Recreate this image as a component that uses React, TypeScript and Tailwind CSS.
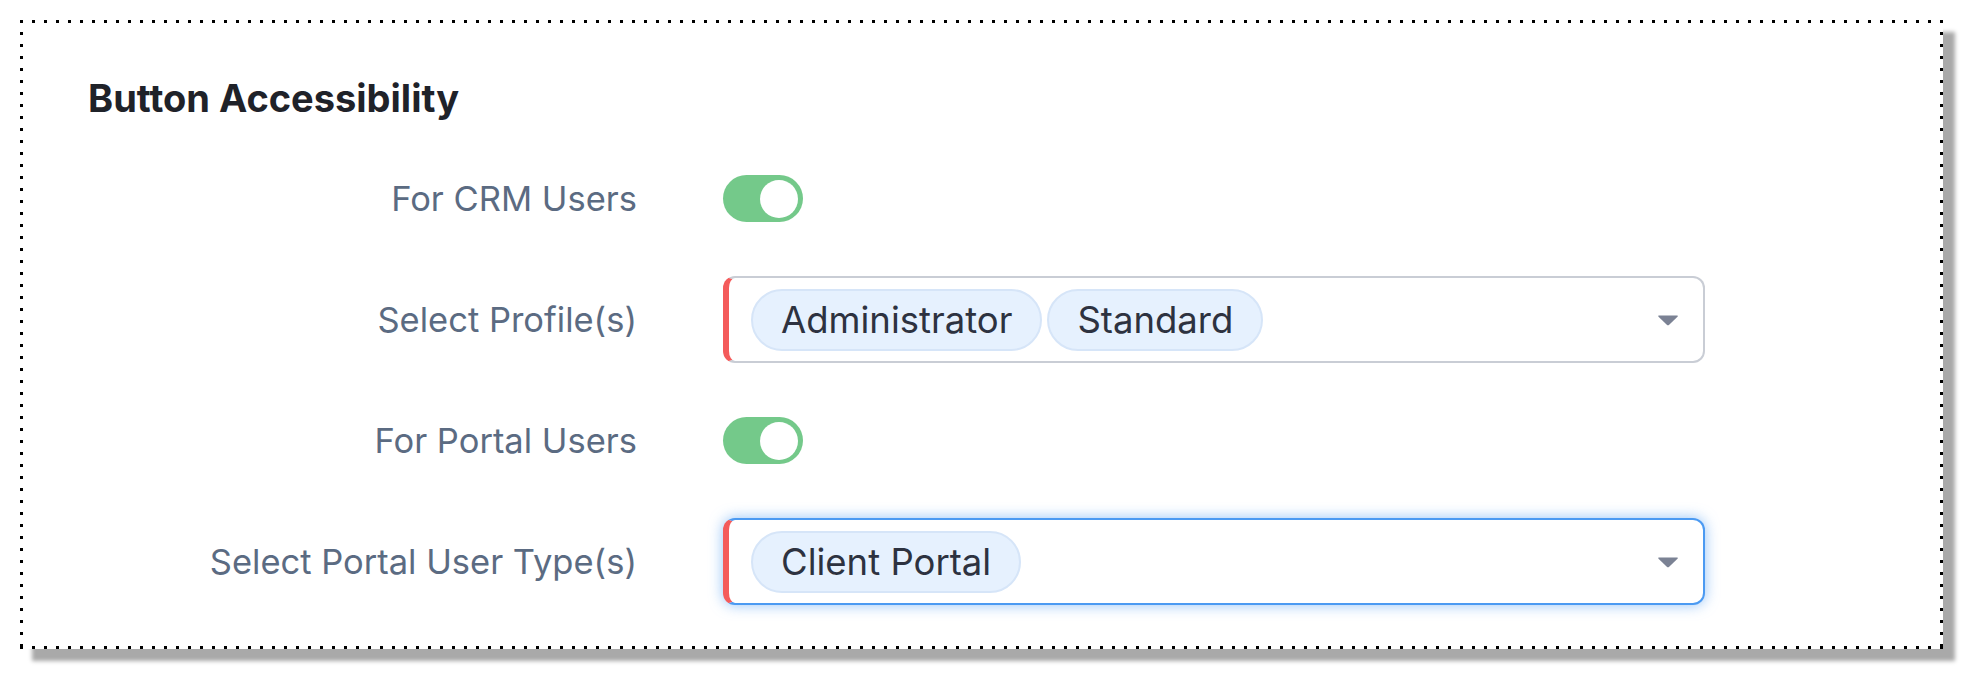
import React from "react";

const Toggle: React.FC = () => (
  <div className="flex items-center justify-end w-[80px] h-[47px] rounded-full bg-[#74c98a] pr-[5px]">
    <div className="w-[38px] h-[38px] rounded-full bg-white" />
  </div>
);

const Chip: React.FC<{ label: string }> = ({ label }) => (
  <span className="flex items-center h-[62px] px-[28px] rounded-full bg-[#e6f1fe] border-2 border-[#d6e5f8] text-[36.5px] leading-[44px] text-[#2d3240]">
    {label}
  </span>
);

const MultiSelect: React.FC<{ items: string[]; focused?: boolean }> = ({ items, focused }) => (
  <div
    className={
      focused
        ? "flex items-center w-[982px] h-[87px] rounded-[12px] border-2 border-l-[6px] border-[#4b9af2] border-l-[#f45b5b] bg-white pl-[22px] pr-[24px] shadow-[0_0_14px_rgba(75,154,242,0.6)]"
        : "flex items-center w-[982px] h-[87px] rounded-[12px] border-2 border-l-[6px] border-[#c9cdd5] border-l-[#f45b5b] bg-white pl-[22px] pr-[24px]"
    }
  >
    <div className="flex flex-1 items-center gap-[5px]">
      {items.map((it) => (
        <Chip key={it} label={it} />
      ))}
    </div>
    <svg width="22" height="12" viewBox="0 0 22 12">
      <path d="M2 1.5 L20 1.5 Q21.5 1.5 20.5 2.8 L12.2 10.8 Q11 11.8 9.8 10.8 L1.5 2.8 Q0.5 1.5 2 1.5 Z" fill="#7b8294" />
    </svg>
  </div>
);

const Row: React.FC<{ label: string; children: React.ReactNode }> = ({ label, children }) => (
  <>
    <div className="text-right text-[34.5px] leading-[41px] text-[#5b6b82]">{label}</div>
    <div className="flex items-center">{children}</div>
  </>
);

export default function App() {
  return (
    <div
      className="w-[1978px] h-[684px] bg-white pt-[20px] pl-[20px]"
      style={{ fontFamily: "Inter, 'Noto Sans', sans-serif" }}
    >
      <div className="w-[1923px] h-[629px] bg-white shadow-[12px_12px_4px_#a9a9a9] [background-image:linear-gradient(to_right,#000_3px,transparent_3px),linear-gradient(to_right,#000_3px,transparent_3px),linear-gradient(to_bottom,#000_3px,transparent_3px),linear-gradient(to_bottom,#000_3px,transparent_3px)] [background-size:12px_3px,12px_3px,3px_12px,3px_12px] [background-position:0_0,0_100%,0_0,100%_0] [background-repeat:repeat-x,repeat-x,repeat-y,repeat-y]">
        <h1 className="pl-[68px] pt-[56px] text-[38px] leading-[44px] font-bold text-[#1f2229]">
          Button Accessibility
        </h1>
        <div className="mt-[55px] grid grid-cols-[617px_982px] items-center gap-x-[86px] gap-y-[54px]">
          <Row label="For CRM Users">
            <Toggle />
          </Row>
          <Row label="Select Profile(s)">
            <MultiSelect items={["Administrator", "Standard"]} />
          </Row>
          <Row label="For Portal Users">
            <Toggle />
          </Row>
          <Row label="Select Portal User Type(s)">
            <MultiSelect items={["Client Portal"]} focused />
          </Row>
        </div>
      </div>
    </div>
  );
}
